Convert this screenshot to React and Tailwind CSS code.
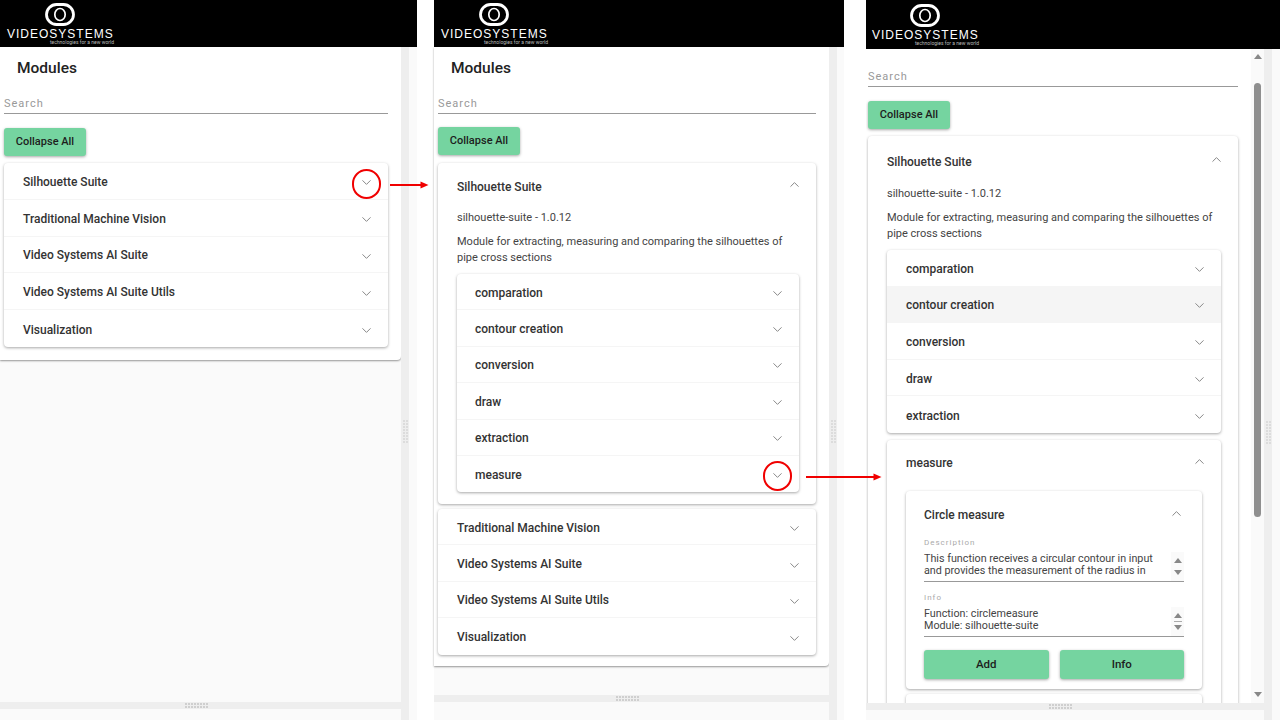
import { ChevronDown, ChevronUp } from 'lucide-react'

const SUITES = ['Traditional Machine Vision', 'Video Systems AI Suite', 'Video Systems AI Suite Utils', 'Visualization']
const SUBMODULES = ['comparation', 'contour creation', 'conversion', 'draw', 'extraction']

function Logo() {
  return (
    <div className="w-[107px] flex flex-col items-center">
      <svg width="30" height="23" viewBox="0 0 30 23" className="mt-[3px] -ml-[2px] shrink-0">
        <rect x="1.5" y="1.5" width="27" height="20" rx="10" fill="none" stroke="#fff" strokeWidth="2.8" />
        <ellipse cx="15" cy="11.5" rx="5.2" ry="6" fill="none" stroke="#fff" strokeWidth="1.7" />
      </svg>
      <p className="w-full mt-[3px] text-[12px] leading-[11px] tracking-[1px] text-white whitespace-nowrap font-['Liberation_Sans']">VIDEOSYSTEMS</p>
      <p className="w-full text-right text-[5px] leading-[5px] text-[#bbb] whitespace-nowrap">technologies for a new world</p>
    </div>
  )
}

function Row({ label, chevronClass = 'mt-1', className = '', h = 'h-[36.8px]', pad = 'pl-[19px] pr-[14px]' }) {
  return (
    <div className={`flex items-center justify-between border-b border-[#f5f5f5] last:border-b-0 ${h} ${pad} ${className}`}>
      <span className="mt-[2px] text-[12px] font-medium text-[#333]">{label}</span>
      <ChevronDown size={15} strokeWidth={1.6} className={`text-[#888] ${chevronClass}`} />
    </div>
  )
}

function Card({ className = '', children }) {
  return <div className={`bg-white rounded shadow-[0_1px_3px_rgba(0,0,0,0.35)] ${className}`}>{children}</div>
}

function SectionHead({ label, pt = 'pt-[10px]', className = '' }) {
  return (
    <div className={`flex items-center justify-between h-[37px] ${pt} ${className}`}>
      <span className="text-[12px] font-medium text-[#333]">{label}</span>
      <ChevronUp size={15} strokeWidth={1.6} className="text-[#888] -mt-1" />
    </div>
  )
}

function Search() {
  return (
    <div className="border-b border-[#999] h-[20px] text-[11px] tracking-[1px] leading-[20px] text-[#999]">Search</div>
  )
}

function CollapseButton() {
  return (
    <button className="block w-[82px] h-[28px] rounded-[3px] bg-[#75d4a0] text-[11px] font-medium text-[#1d1d1d] shadow-[0_1px_3px_rgba(0,0,0,0.35)]">Collapse All</button>
  )
}

function GripH() {
  return (
    <div className="grid grid-cols-8 gap-x-[1px] gap-y-[1px] w-[23px]">
      {Array.from({ length: 16 }).map((_, i) => <span key={i} className="w-[2px] h-[2px] bg-[#cfcfcf]" />)}
    </div>
  )
}

function GripV() {
  return (
    <div className="grid grid-cols-2 gap-x-[1px] gap-y-[1px] w-[5px]">
      {Array.from({ length: 16 }).map((_, i) => <span key={i} className="w-[2px] h-[2px] bg-[#dcdcdc]" />)}
    </div>
  )
}

function VGutter() {
  return (
    <div className="w-[8px] shrink-0 bg-[#eeeeee] flex items-center justify-center pt-[95px]">
      <GripV />
    </div>
  )
}

function HGutter() {
  return (
    <div className="h-[7px] shrink-0 bg-[#eeeeee] flex items-center justify-center pr-[9px]">
      <GripH />
    </div>
  )
}

function PanelOne() {
  return (
    <section className="w-[417px] shrink-0 flex flex-col">
      <header className="h-[47px] shrink-0 bg-black pl-[7px] overflow-hidden"><Logo /></header>
      <div className="flex-1 flex min-h-0">
        <div className="w-[401px] shrink-0 flex flex-col bg-[#fafafa]">
          <div className="h-[313px] bg-white shadow-[0_1px_2px_rgba(0,0,0,0.4)] rounded-br">
            <h2 className="pl-[17px] pt-[12px] text-[15.5px] leading-[19px] font-medium text-[#222]">Modules</h2>
            <div className="mt-[16px] ml-[4px] w-[384px]"><Search /></div>
            <div className="mt-[14px] ml-[4px]"><CollapseButton /></div>
            <Card className="mt-[7px] ml-[4px] w-[384px]">
              {['Silhouette Suite', ...SUITES].map(l => <Row key={l} label={l} />)}
            </Card>
          </div>
          <div className="flex-1" />
          <HGutter />
          <div className="h-[11px]" />
        </div>
        <VGutter />
        <div className="flex-1 bg-[#fafafa]" />
      </div>
    </section>
  )
}

function PanelTwo() {
  return (
    <section className="w-[410px] ml-[17px] shrink-0 flex flex-col">
      <header className="h-[47px] shrink-0 bg-black pl-[7px] overflow-hidden"><Logo /></header>
      <div className="flex-1 flex min-h-0">
        <div className="w-[395px] shrink-0 flex flex-col bg-[#fafafa]">
          <div className="h-[619px] bg-white shadow-[0_1px_2px_rgba(0,0,0,0.4)] rounded-br">
            <h2 className="pl-[17px] pt-[12px] text-[15.5px] leading-[19px] font-medium text-[#222]">Modules</h2>
            <div className="mt-[16px] ml-[4px] w-[378px]"><Search /></div>
            <div className="mt-[13px] ml-[4px]"><CollapseButton /></div>
            <Card className="mt-[8px] ml-[4px] w-[378px] h-[341px] pl-[19px] pr-[14px]">
              <SectionHead label="Silhouette Suite" />
              <p className="mt-[10px] text-[11px] leading-[16px] text-[#444]">silhouette-suite - 1.0.12</p>
              <p className="mt-[8px] text-[11px] leading-[15.5px] text-[#444]">Module for extracting, measuring and comparing the silhouettes of pipe cross sections</p>
              <Card className="mt-[9px] w-[342px]">
                {[...SUBMODULES, 'measure'].map(l => (
                  <Row key={l} label={l} chevronClass="mt-[3px]" h="h-[36.4px]" pad="pl-[18px] pr-[14px]" />
                ))}
              </Card>
            </Card>
            <Card className="mt-[5px] ml-[4px] w-[378px]">
              {SUITES.map(l => <Row key={l} label={l} h="h-[36.4px]" />)}
            </Card>
          </div>
          <div className="flex-1" />
          <HGutter />
          <div className="h-[18px]" />
        </div>
        <VGutter />
        <div className="flex-1 bg-[#fafafa]" />
      </div>
    </section>
  )
}

function ScrollText({ label, lines, grip }) {
  return (
    <div>
      <p className="text-[8px] leading-[10px] tracking-[1px] text-[#aaa]">{label}</p>
      <div className="mt-[4px] flex justify-between h-[30px] border-b border-[#999]">
        <div className="text-[10.75px] leading-[12.5px] text-[#444] pt-[1px] whitespace-nowrap">
          {lines.map(l => <p key={l}>{l}</p>)}
        </div>
        <div className="w-[13px] flex flex-col items-center justify-center bg-[#fafafa]">
          <span className="w-0 h-0 border-x-[4px] border-x-transparent border-b-[5px] border-b-[#888]" />
          <span className={`w-[8px] h-[1px] my-[3px] ${grip ? 'bg-[#aaa]' : 'bg-transparent'}`} />
          <span className="w-0 h-0 border-x-[4px] border-x-transparent border-t-[5px] border-t-[#888]" />
        </div>
      </div>
    </div>
  )
}

function GreenButton({ children }) {
  return (
    <button className="flex-1 h-[29px] rounded-[3px] bg-[#75d4a0] text-[11.5px] font-medium text-[#1d1d1d] shadow-[0_1px_3px_rgba(0,0,0,0.35)]">{children}</button>
  )
}

function PanelThree() {
  return (
    <section className="w-[414px] ml-[22px] shrink-0 flex flex-col h-[720px]">
      <header className="h-[49px] shrink-0 bg-black pl-[6px] pt-[1px] overflow-hidden"><Logo /></header>
      <div className="flex-1 flex min-h-0">
        <div className="w-[398px] shrink-0 flex flex-col min-h-0">
          <div className="flex-1 flex min-h-0">
            <div className="w-[385px] shrink-0 overflow-hidden bg-white">
              <div className="mt-[18px] ml-[2px] w-[370px]"><Search /></div>
              <div className="mt-[14px] ml-[2px]"><CollapseButton /></div>
              <Card className="mt-[7px] ml-[2px] w-[370px] h-[600px] pl-[19px] pr-[14px]">
                <SectionHead label="Silhouette Suite" pt="pt-[14px]" />
                <p className="mt-[13px] text-[11px] leading-[16px] text-[#444]">silhouette-suite - 1.0.12</p>
                <p className="mt-[8px] text-[11px] leading-[15.5px] text-[#444]">Module for extracting, measuring and comparing the silhouettes of pipe cross sections</p>
                <Card className="mt-[9px] w-[334px]">
                  {SUBMODULES.map(l => (
                    <Row
                      key={l}
                      label={l}
                      chevronClass="mt-[3px]"
                      h="h-[36.6px]"
                      className={l === 'contour creation' ? 'bg-[#f5f5f5]' : ''}
                    />
                  ))}
                </Card>
                <Card className="mt-[7px] w-[334px] h-[300px] pl-[19px] pr-[14px]">
                  <SectionHead label="measure" />
                  <Card className="mt-[14px] w-[296px] h-[198px] pl-[18px] pr-[18px]">
                    <SectionHead label="Circle measure" pt="pt-[12px]" className="mb-[10px]" />
                    <ScrollText label="Description" lines={['This function receives a circular contour in input', 'and provides the measurement of the radius in']} />
                    <div className="mt-[11px]">
                      <ScrollText label="Info" grip lines={['Function: circlemeasure', 'Module: silhouette-suite']} />
                    </div>
                    <div className="mt-[13px] flex gap-[11px]">
                      <GreenButton>Add</GreenButton>
                      <GreenButton>Info</GreenButton>
                    </div>
                  </Card>
                  <Card className="mt-[5px] w-[296px] h-[40px]" />
                </Card>
              </Card>
            </div>
            <div className="w-[13px] shrink-0 bg-[#fafafa] flex flex-col items-center pt-[5px] pb-[6px]">
              <span className="w-0 h-0 border-x-[4px] border-x-transparent border-b-[5px] border-b-[#888]" />
              <div className="mt-[24px] w-[7px] h-[434px] rounded-full bg-[#8f8f8f]" />
              <div className="flex-1" />
              <span className="w-0 h-0 border-x-[4px] border-x-transparent border-t-[5px] border-t-[#888]" />
            </div>
          </div>
          <HGutter />
          <div className="h-[10px] bg-[#fafafa]" />
        </div>
        <VGutter />
        <div className="flex-1 bg-[#fafafa]" />
      </div>
    </section>
  )
}

function Annotations() {
  return (
    <>
      <span className="absolute left-[352px] top-[169px] w-[29px] h-[30px] rounded-full border-2 border-[#f00000]" />
      <span className="absolute left-[763px] top-[461px] w-[29px] h-[30px] rounded-full border-2 border-[#f00000]" />
      <svg className="absolute left-[390px] top-[179px]" width="40" height="12" viewBox="0 0 40 12">
        <path d="M0 6h32" stroke="#f00000" strokeWidth="2" />
        <path d="M30.5 2.5L38.5 6L30.5 9.5z" fill="#f00000" />
      </svg>
      <svg className="absolute left-[806px] top-[471px]" width="78" height="12" viewBox="0 0 78 12">
        <path d="M0 6h69" stroke="#f00000" strokeWidth="2" />
        <path d="M67.5 2.5L75.5 6L67.5 9.5z" fill="#f00000" />
      </svg>
    </>
  )
}

export default function App() {
  return (
    <div className="relative flex w-[1280px] h-[720px] overflow-hidden bg-white font-['Roboto',sans-serif]">
      <PanelOne />
      <PanelTwo />
      <PanelThree />
      <Annotations />
    </div>
  )
}
